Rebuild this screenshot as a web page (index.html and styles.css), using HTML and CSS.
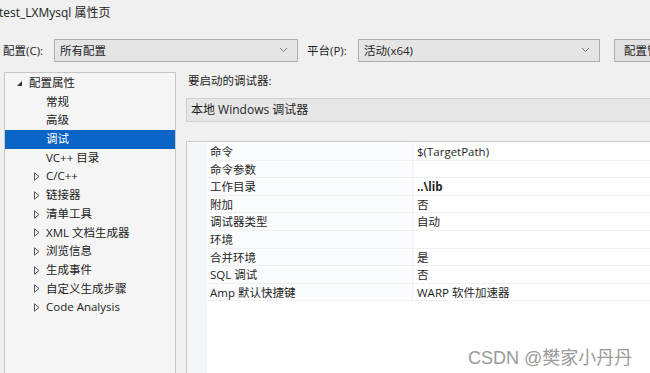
FILE: index.html
```html
<!DOCTYPE html>
<html lang="zh">
<head>
<meta charset="utf-8">
<link rel="stylesheet" href="styles.css">
</head>
<body>
<div class="title">test_LXMysql 属性页</div>
<div class="toolbar">
  <span class="lbl">配置(C):</span>
  <div class="combo c1"><span>所有配置</span><svg class="chev" width="9" height="6" viewBox="0 0 9 6"><path d="M1 1 L4.5 4.5 L8 1" fill="none" stroke="#777" stroke-width="1"/></svg></div>
  <span class="lbl lbl2">平台(P):</span>
  <div class="combo c2"><span>活动(x64)</span><svg class="chev" width="9" height="6" viewBox="0 0 9 6"><path d="M1 1 L4.5 4.5 L8 1" fill="none" stroke="#777" stroke-width="1"/></svg></div>
  <div class="btn">配置管理器</div>
</div>
<div class="main">
  <div class="tree">
    <div class="node root"><span class="exp"><svg width="7" height="7" viewBox="0 0 7 7"><path d="M6 1 L6 6 L1 6 Z" fill="#333"/></svg></span>配置属性</div>
    <div class="node leaf">常规</div>
    <div class="node leaf">高级</div>
    <div class="node leaf sel">调试</div>
    <div class="node leaf">VC++ 目录</div>
    <div class="node col"><span class="tri"><svg width="6" height="9" viewBox="0 0 6 9"><path d="M0.5 0.8 L5 4.5 L0.5 8.2 Z" fill="none" stroke="#555" stroke-width="1"/></svg></span>C/C++</div>
    <div class="node col"><span class="tri"><svg width="6" height="9" viewBox="0 0 6 9"><path d="M0.5 0.8 L5 4.5 L0.5 8.2 Z" fill="none" stroke="#555" stroke-width="1"/></svg></span>链接器</div>
    <div class="node col"><span class="tri"><svg width="6" height="9" viewBox="0 0 6 9"><path d="M0.5 0.8 L5 4.5 L0.5 8.2 Z" fill="none" stroke="#555" stroke-width="1"/></svg></span>清单工具</div>
    <div class="node col"><span class="tri"><svg width="6" height="9" viewBox="0 0 6 9"><path d="M0.5 0.8 L5 4.5 L0.5 8.2 Z" fill="none" stroke="#555" stroke-width="1"/></svg></span>XML 文档生成器</div>
    <div class="node col"><span class="tri"><svg width="6" height="9" viewBox="0 0 6 9"><path d="M0.5 0.8 L5 4.5 L0.5 8.2 Z" fill="none" stroke="#555" stroke-width="1"/></svg></span>浏览信息</div>
    <div class="node col"><span class="tri"><svg width="6" height="9" viewBox="0 0 6 9"><path d="M0.5 0.8 L5 4.5 L0.5 8.2 Z" fill="none" stroke="#555" stroke-width="1"/></svg></span>生成事件</div>
    <div class="node col"><span class="tri"><svg width="6" height="9" viewBox="0 0 6 9"><path d="M0.5 0.8 L5 4.5 L0.5 8.2 Z" fill="none" stroke="#555" stroke-width="1"/></svg></span>自定义生成步骤</div>
    <div class="node col"><span class="tri"><svg width="6" height="9" viewBox="0 0 6 9"><path d="M0.5 0.8 L5 4.5 L0.5 8.2 Z" fill="none" stroke="#555" stroke-width="1"/></svg></span>Code Analysis</div>
  </div>
  <div class="right">
    <div class="rlabel">要启动的调试器:</div>
    <div class="field">本地 Windows 调试器</div>
    <div class="grid">
      <div class="row"><div class="gut"></div><div class="name">命令</div><div class="val">$(TargetPath)</div></div>
      <div class="row"><div class="gut"></div><div class="name">命令参数</div><div class="val"></div></div>
      <div class="row"><div class="gut"></div><div class="name">工作目录</div><div class="val bold">..\lib</div></div>
      <div class="row"><div class="gut"></div><div class="name">附加</div><div class="val">否</div></div>
      <div class="row"><div class="gut"></div><div class="name">调试器类型</div><div class="val">自动</div></div>
      <div class="row"><div class="gut"></div><div class="name">环境</div><div class="val"></div></div>
      <div class="row"><div class="gut"></div><div class="name">合并环境</div><div class="val">是</div></div>
      <div class="row"><div class="gut"></div><div class="name">SQL 调试</div><div class="val">否</div></div>
      <div class="row"><div class="gut"></div><div class="name">Amp 默认快捷键</div><div class="val">WARP 软件加速器</div></div>
      <div class="rest"><div class="gut"></div></div>
    </div>
  </div>
</div>
<div class="watermark">CSDN @樊家小丹丹</div>
</body>
</html>
```
FILE: styles.css
```css
html, body {
  margin: 0;
  padding: 0;
  width: 650px;
  height: 373px;
  overflow: hidden;
}
body {
  background: #f0f0f0;
  font-family: "Open Sans", "Noto Sans CJK SC", sans-serif;
  font-size: 11.5px;
  color: #1e1e1e;
  position: relative;
}
.title {
  height: 26px;
  line-height: 26px;
  margin-left: -1px;
  font-size: 12px;
  color: #222;
}
.toolbar {
  display: flex;
  align-items: center;
  height: 24px;
  margin-top: 12px;
  white-space: nowrap;
}
.toolbar > * { flex: none; }
.lbl {
  margin-left: 3px;
  width: 51px;
}
.lbl2 {
  margin-left: 9px;
  width: 51px;
}
.combo {
  height: 23px;
  box-sizing: border-box;
  border: 1px solid #adadad;
  background: #e5e5e5;
  display: flex;
  align-items: center;
  justify-content: space-between;
  padding: 0 9px 0 5px;
}
.c1 { width: 244px; }
.c2 { width: 242px; }
.btn {
  margin-left: 14px;
  height: 23px;
  box-sizing: border-box;
  border: 1px solid #adadad;
  border-right: none;
  background: #e1e1e1;
  padding: 0 0 0 9px;
  line-height: 21px;
  width: 38px;
  overflow: hidden;
}
.main {
  display: flex;
  margin-top: 10px;
}
.tree {
  margin-left: 4px;
  width: 172px;
  height: 301px;
  box-sizing: border-box;
  border: 1px solid #c6c6c6;
  border-bottom: none;
  background: #f5f5f5;
  padding-top: 1px;
}
.node {
  height: 18.7px;
  line-height: 18.7px;
  white-space: nowrap;
  display: flex;
  align-items: center;
  color: #222;
}
.root { padding-left: 11px; }
.exp {
  width: 13px;
  display: inline-flex;
  align-items: center;
}
.leaf { padding-left: 41px; }
.col { padding-left: 29px; }
.tri {
  width: 12px;
  display: inline-flex;
  align-items: center;
}
.sel {
  background: #0a64c6;
  color: #fff;
}
.right {
  margin-left: 10px;
  flex: 1;
}
.rlabel {
  height: 17px;
  line-height: 17px;
  padding-left: 2px;
}
.field {
  margin-top: 9px;
  height: 24px;
  box-sizing: border-box;
  border: 1px solid #d0d0d0;
  border-right: none;
  background: #e6e6e6;
  line-height: 22px;
  padding-left: 4px;
  font-size: 12px;
}
.grid {
  margin-top: 19px;
  height: 232px;
  box-sizing: border-box;
  border: 1px solid #c8c8c8;
  border-right: none;
  border-bottom: none;
  background: #fff;
  padding-top: 1px;
  display: flex;
  flex-direction: column;
}
.row {
  display: flex;
  height: 17.6px;
  line-height: 17.6px;
}
.gut {
  width: 20px;
  background: #f3f5f8;
  flex: none;
}
.name {
  width: 206px;
  padding-left: 3px;
  box-sizing: border-box;
  background: #fbfcfd;
  border-bottom: 1px solid #eef0f3;
  border-right: 1px solid #eef0f3;
}
.val {
  flex: 1;
  padding-left: 4px;
  border-bottom: 1px solid #eef0f3;
}
.bold { font-weight: bold; }
.rest {
  flex: 1;
  display: flex;
}
.watermark {
  position: absolute;
  left: 468px;
  top: 343px;
  font-family: "Liberation Sans", "Noto Sans CJK SC", sans-serif;
  font-size: 18px;
  color: #9a9a9a;
}
```
